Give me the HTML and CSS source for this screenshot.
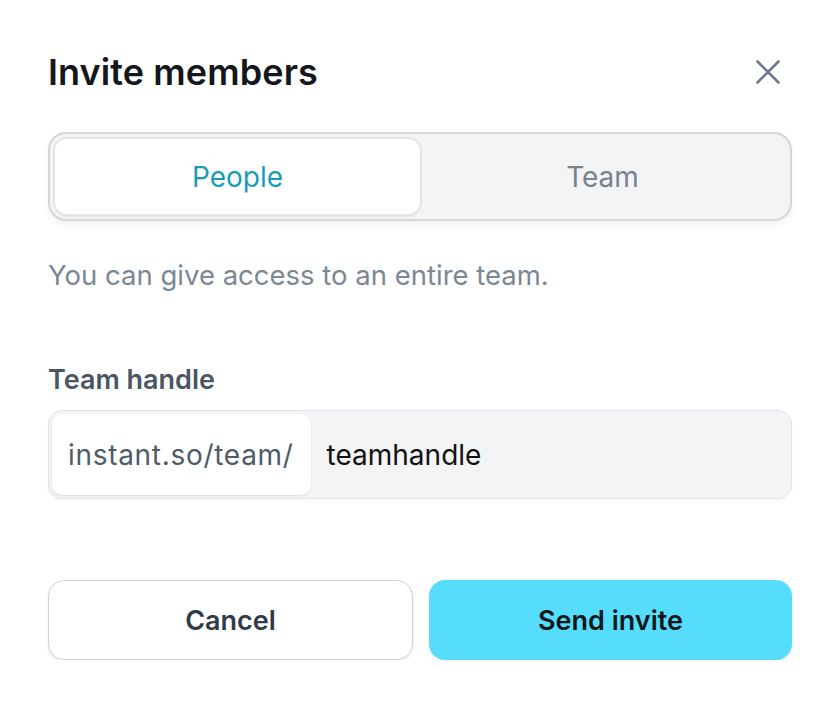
FILE: index.html
```html
<!DOCTYPE html>
<html lang="en">
<head>
<meta charset="utf-8">
<title>Invite members</title>
<link rel="stylesheet" href="styles.css">
</head>
<body>
<div class="dialog">
  <div class="header">
    <h1 class="title">Invite members</h1>
    <button class="close" aria-label="Close">
      <svg width="24" height="24" viewBox="0 0 24 24" fill="none" stroke="#6b7785" stroke-width="2.6" stroke-linecap="round"><path d="M1.5 1.5L22.5 22.5M22.5 1.5L1.5 22.5"/></svg>
    </button>
  </div>
  <div class="segmented">
    <div class="seg seg-active">People</div>
    <div class="seg">Team</div>
  </div>
  <p class="desc">You can give access to an entire team.</p>
  <label class="label">Team handle</label>
  <div class="input">
    <span class="prefix">instant.so/team/</span>
    <span class="value">teamhandle</span>
  </div>
  <div class="actions">
    <button class="btn btn-cancel">Cancel</button>
    <button class="btn btn-primary">Send invite</button>
  </div>
</div>
</body>
</html>
```

FILE: styles.css
```css
* { box-sizing: border-box; }
html, body { margin: 0; padding: 0; background: #ffffff; }
body { font-family: Inter, "Noto Sans", sans-serif; color: #111827; }
.dialog { padding: 48px 48px 0 48px; display: flex; flex-direction: column; }
.header { height: 48px; display: flex; align-items: center; justify-content: space-between; }
.title { margin: 0; font-size: 36px; font-weight: 600; letter-spacing: 0.1px; color: #14171c; line-height: 48px; }
.close { background: none; border: 0; padding: 0; width: 24px; height: 24px; margin-right: 12px; display: flex; }
.segmented { margin-top: 36px; height: 89px; border: 2px solid #d3d6db; border-radius: 18px; background: #f3f4f6; padding: 5px; display: flex; box-shadow: 0 4px 6px rgba(0,0,0,0.05); }
.seg { flex: 1; display: flex; align-items: center; justify-content: center; font-size: 28px; color: #77828f; border-radius: 12px; }
.seg-active { background: #ffffff; color: #1a9ab6; box-shadow: 0 0 0 2px #e3e5e8, 0 2px 3px rgba(0,0,0,0.12); }
.desc { margin: 38px 0 0 0; font-size: 27.5px; line-height: 32px; color: #7b8794; }
.label { margin-top: 73px; font-size: 27px; line-height: 32px; font-weight: 600; color: #4b5663; }
.input { margin-top: 14px; height: 89px; border: 1px solid #e0e3e7; border-radius: 14px; background: #f3f4f6; padding: 3px; display: flex; align-items: stretch; box-shadow: 0 2px 4px rgba(0,0,0,0.03); }
.prefix { background: #ffffff; border-radius: 10px; padding: 0 17px 0 16px; display: flex; align-items: center; font-size: 28px; letter-spacing: 0.7px; color: #4e5b69; box-shadow: 0 1px 2px rgba(0,0,0,0.1); }
.value { display: flex; align-items: center; padding-left: 16px; font-size: 28px; color: #111111; }
.actions { margin-top: 81px; display: flex; gap: 16px; }
.btn { flex: 1; height: 80px; border-radius: 16px; font-family: Inter, "Noto Sans", sans-serif; font-size: 27px; font-weight: 600; cursor: pointer; }
.btn-cancel { background: #ffffff; border: 1px solid #cfd3d8; color: #2f3b46; box-shadow: 0 2px 3px rgba(0,0,0,0.08); }
.btn-primary { background: #55ddfb; border: 0; color: #12171c; box-shadow: 0 2px 3px rgba(0,0,0,0.06); }
```
